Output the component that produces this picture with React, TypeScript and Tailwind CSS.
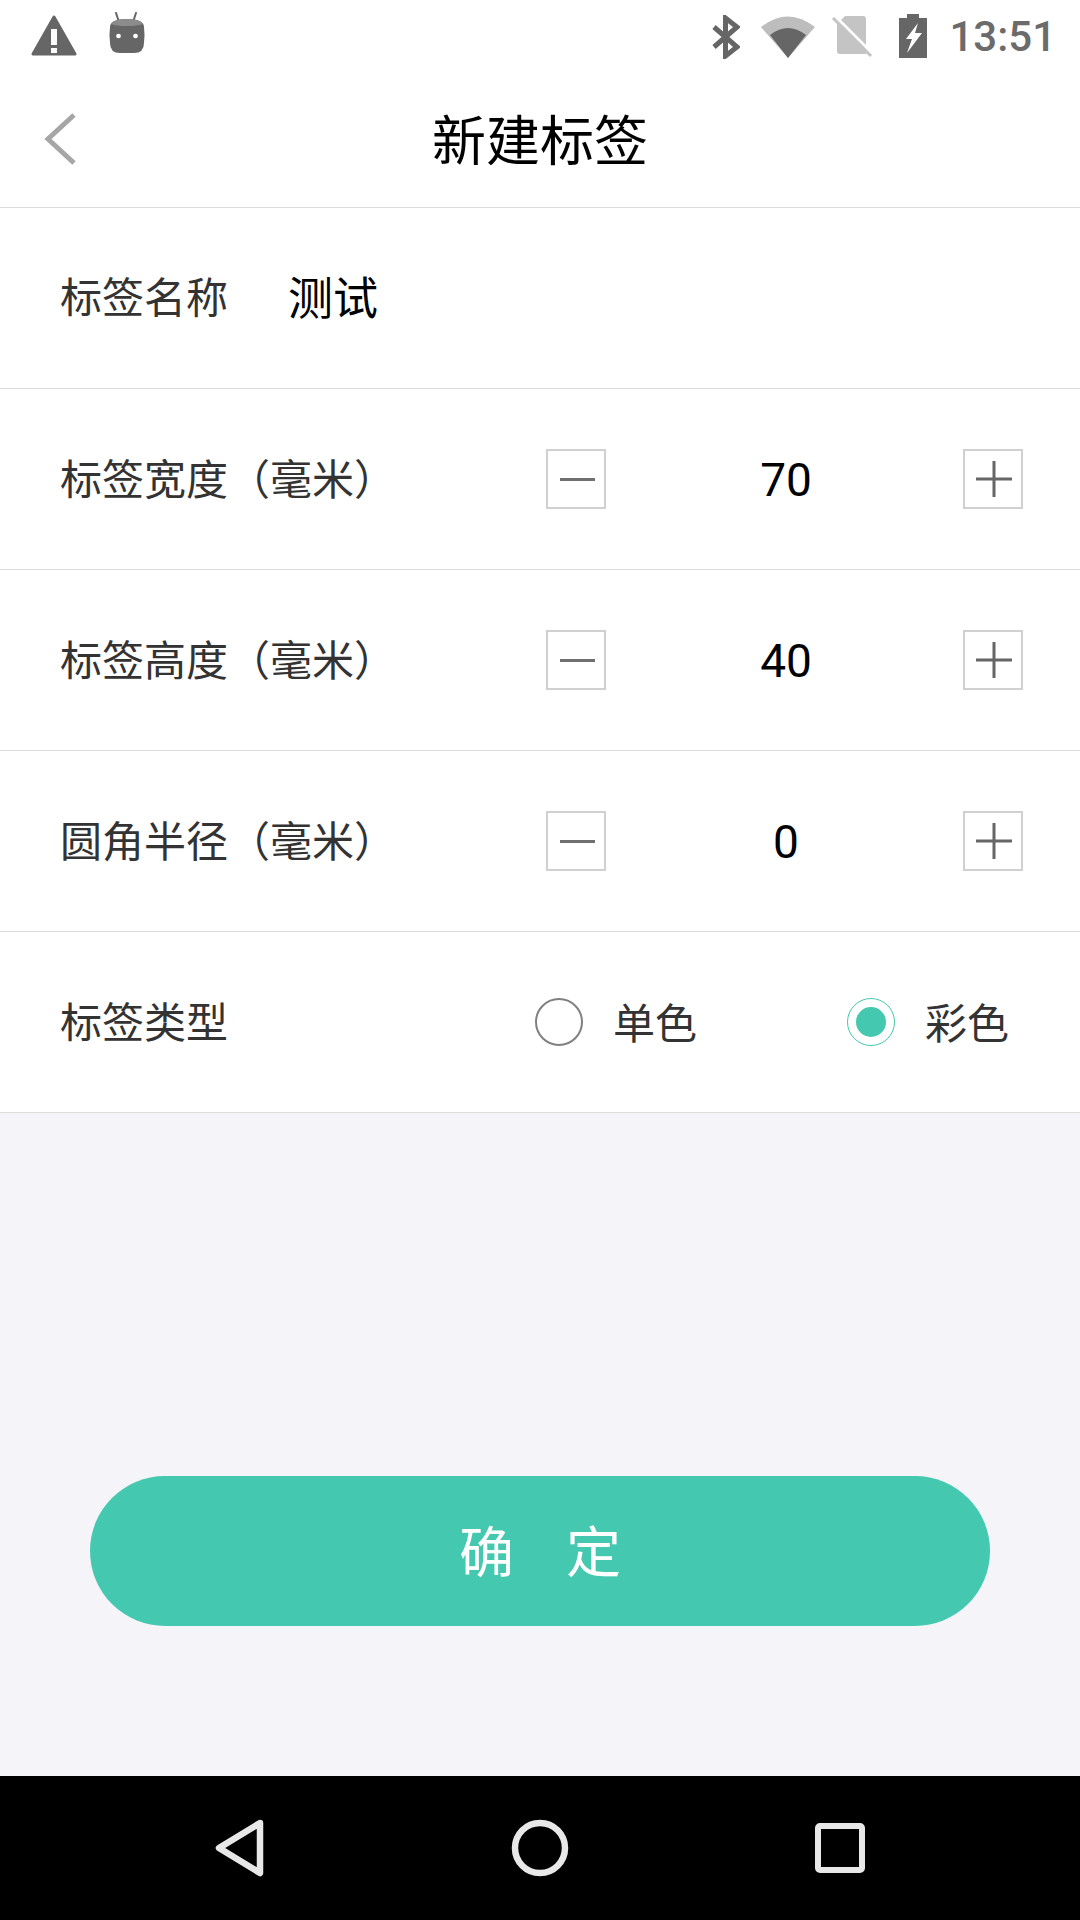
import React from 'react';

const cjk = "font-['Noto_Sans_CJK_SC',sans-serif]";

const StatusBar = () => (
  <div className="h-[72px] flex items-center bg-white pl-[31px] pr-[24px] shrink-0">
    {/* warning */}
    <svg width="46" height="42" viewBox="0 0 46 42" className="mt-[-1px]">
      <path d="M23 2 L44 39 L2 39 Z" fill="#666" stroke="#666" strokeWidth="3" strokeLinejoin="round" />
      <rect x="20" y="14" width="6" height="16" fill="#fff" />
      <rect x="20" y="33" width="6" height="5" fill="#fff" />
    </svg>
    {/* android */}
    <svg width="36" height="42" viewBox="0 0 36 42" className="ml-[32px] mt-[-6px]">
      <path d="M7 1 L10 10 M27 1 L24 10" stroke="#666" strokeWidth="2" strokeLinecap="round" />
      <path d="M1 15 Q1 7 18 7 Q35 7 35 15 Q36 22 35 31 Q35 41 25 41 L11 41 Q1 41 1 31 Q0 22 1 15 Z" fill="#666" />
      <path d="M2 12 Q5 7 18 7 Q31 7 34 12 Q28 14 18 14 Q8 14 2 12 Z" fill="#8c8c8c" />
      <ellipse cx="9.5" cy="24" rx="2.4" ry="2.2" fill="#fff" />
      <ellipse cx="26.5" cy="24" rx="2.4" ry="2.2" fill="#fff" />
    </svg>
    <div className="flex-1" />
    {/* bluetooth */}
    <svg width="28" height="44" viewBox="0 0 28 44" className="mt-[1px]">
      <path d="M2 12 L25 32 L13.5 41 L13.5 3 L25 12 L2 32" fill="none" stroke="#666" strokeWidth="5" />
    </svg>
    {/* wifi */}
    <svg width="54" height="44" viewBox="0 0 54 44" className="ml-[21px]">
      <path d="M0 13 Q27 -8 54 13 L27 44 Z" fill="#bdbdbd" />
      <path d="M9 21 Q27 7 45 21 L27 44 Z" fill="#666" />
    </svg>
    {/* sim off */}
    <svg width="42" height="44" viewBox="0 0 42 44" className="ml-[16px]">
      <path d="M14 2 L32 2 Q35 2 35 5 L35 40 L9 40 Q6 40 6 37 L6 10 Z" fill="#c4c4c4" />
      <path d="M4 2 L42 40" stroke="#fff" strokeWidth="3" />
      <path d="M2 4 L40 42" stroke="#c4c4c4" strokeWidth="3" />
    </svg>
    {/* battery charging */}
    <svg width="30" height="46" viewBox="0 0 30 46" className="ml-[25px]">
      <path d="M9 1 L21 1 L21 5 L29 5 L29 45 L1 45 L1 5 L9 5 Z" fill="#666" />
      <path d="M20 10 L8 26 L14 26 L9 40 L24 20 L17 20 Z" fill="#fff" />
    </svg>
    <span className="ml-[21px] mt-[2px] font-['Roboto',sans-serif] font-medium text-[42px] leading-none text-[#6b6b6b]">13:51</span>
  </div>
);

const Header = () => (
  <div className="relative h-[136px] flex items-center justify-center bg-white border-b border-[#dcdcdc] pb-[3px] shrink-0">
    <svg width="34" height="54" viewBox="0 0 34 54" className="absolute left-[43px] top-[40px]">
      <path d="M31 3 L5 27 L31 51" fill="none" stroke="#a6a6a6" strokeWidth="5" />
    </svg>
    <span className={`${cjk} text-[54px] leading-none text-black`}>新建标签</span>
  </div>
);

const Row = ({ label, children }: { label: string; children?: React.ReactNode }) => (
  <div className="h-[181px] flex items-center justify-between bg-white border-b border-[#dcdcdc] pl-[60px]">
    <span className={`${cjk} text-[42px] leading-none text-[#333] whitespace-nowrap mb-[4px]`}>{label}</span>
    {children}
  </div>
);

const Stepper = ({ value }: { value: string }) => (
  <div className="w-[477px] mr-[57px] flex items-center justify-between">
    <div className="w-[60px] h-[60px] border-2 border-[#d0d0d0] flex items-center justify-center">
      <div className="w-[35px] h-[3px] ml-[2px] bg-[#707070]" />
    </div>
    <span className="font-['Roboto',sans-serif] text-[46px] leading-none text-black pl-[3px] pt-[2px]">{value}</span>
    <div className="w-[60px] h-[60px] border-2 border-[#d0d0d0] flex items-center justify-center">
      <svg width="36" height="36" viewBox="0 0 36 36" className="ml-[2px]">
        <path d="M0 18 H36 M18 0 V36" stroke="#666" strokeWidth="3" />
      </svg>
    </div>
  </div>
);

const Radio = ({ label, checked }: { label: string; checked?: boolean }) => (
  <div className="w-[312px] flex items-center">
    {checked ? (
      <div className="w-[48px] h-[48px] rounded-full border-[1.5px] border-[#44c9b0] flex items-center justify-center">
        <div className="w-[30px] h-[30px] rounded-full bg-[#44c9b0]" />
      </div>
    ) : (
      <div className="w-[48px] h-[48px] rounded-full border-2 border-[#808080]" />
    )}
    <span className={`${cjk} ml-[30px] mb-[3px] text-[42px] leading-none text-[#333]`}>{label}</span>
  </div>
);

const NavBar = () => (
  <div className="h-[144px] bg-black flex items-center shrink-0 pl-[214px] pb-[1px]">
    <svg width="52" height="58" viewBox="0 0 52 58">
      <path d="M46 4 L5 29 L46 54 Z" fill="none" stroke="#e8e8e8" strokeWidth="6.5" strokeLinejoin="round" />
    </svg>
    <svg width="58" height="58" viewBox="0 0 58 58" className="ml-[245px]">
      <circle cx="29" cy="29" r="25" fill="none" stroke="#e8e8e8" strokeWidth="6.5" />
    </svg>
    <svg width="50" height="50" viewBox="0 0 50 50" className="ml-[246px]">
      <rect x="3" y="3" width="44" height="44" rx="2" fill="none" stroke="#e8e8e8" strokeWidth="6" />
    </svg>
  </div>
);

export default function App() {
  return (
    <div className="w-[1080px] h-[1920px] flex flex-col bg-[#f4f4f9] overflow-hidden">
      <StatusBar />
      <Header />
      <div className="h-[181px] flex items-center bg-white border-b border-[#dcdcdc] pl-[60px] pb-[6px]">
        <span className={`${cjk} w-[228px] text-[42px] leading-none text-[#333]`}>标签名称</span>
        <span className={`${cjk} text-[45px] leading-none text-black`}>测试</span>
      </div>
      <Row label="标签宽度（毫米）"><Stepper value="70" /></Row>
      <Row label="标签高度（毫米）"><Stepper value="40" /></Row>
      <Row label="圆角半径（毫米）"><Stepper value="0" /></Row>
      <Row label="标签类型">
        <div className="flex mr-[-79px] w-[624px]">
          <Radio label="单色" />
          <Radio label="彩色" checked />
        </div>
      </Row>
      <div className="flex-1 flex items-end justify-center pb-[150px]">
        <button type="button" className={`${cjk} w-[900px] h-[150px] rounded-full bg-[#44c9b0] text-white text-[55px] leading-none flex items-center justify-center gap-[52px] pb-[5px]`}>
          <span>确</span>
          <span>定</span>
        </button>
      </div>
      <NavBar />
    </div>
  );
}
